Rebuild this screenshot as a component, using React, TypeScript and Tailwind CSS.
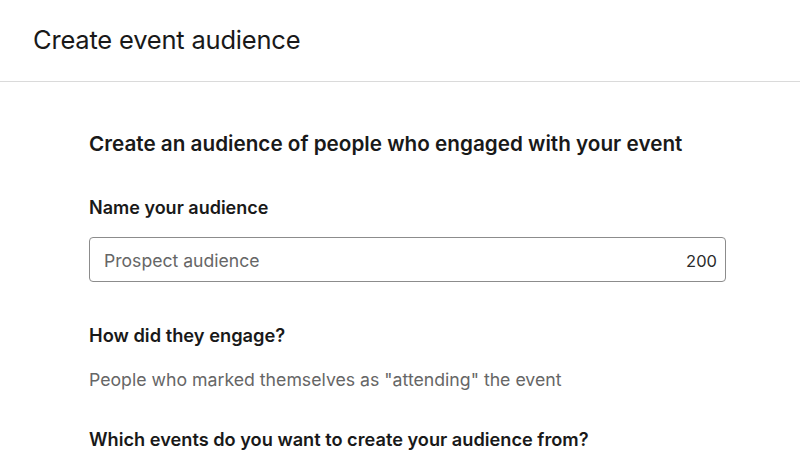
export default function App() {
  return (
    <div className="min-h-screen bg-white text-[#191919]" style={{ fontFamily: 'Inter, "Noto Sans", sans-serif' }}>
      {/* Header */}
      <header className="h-[82px] border-b border-[#dadada] px-[33px] pt-[24px]">
        <h1 className="text-[25.5px] leading-[32px] font-normal tracking-[-0.2px]">Create event audience</h1>
      </header>

      {/* Form */}
      <main className="px-[89px] pt-[48px]">
        <h2 className="text-[20.7px] leading-[28px] font-semibold">
          Create an audience of people who engaged with your event
        </h2>

        <label className="block mt-[38px] text-[18px] leading-[24px] font-semibold">Name your audience</label>
        <div className="mt-[17px] w-[637px] h-[45px] flex items-center justify-between rounded-[4px] border border-[#8c8c8c] px-[14px] pr-[8px] pt-[3px]">
          <span className="text-[17.6px] text-[#666666]">Prospect audience</span>
          <span className="text-[16.5px] text-[#2b2b2b]">200</span>
        </div>

        <h3 className="mt-[41px] text-[18.3px] leading-[24px] font-semibold">How did they engage?</h3>
        <p className="mt-[21px] text-[17.7px] leading-[24px] text-[#666666]">
          People who marked themselves as "attending" the event
        </p>

        <h3 className="mt-[35px] text-[18.2px] leading-[24px] font-semibold">
          Which events do you want to create your audience from?
        </h3>
      </main>
    </div>
  );
}
